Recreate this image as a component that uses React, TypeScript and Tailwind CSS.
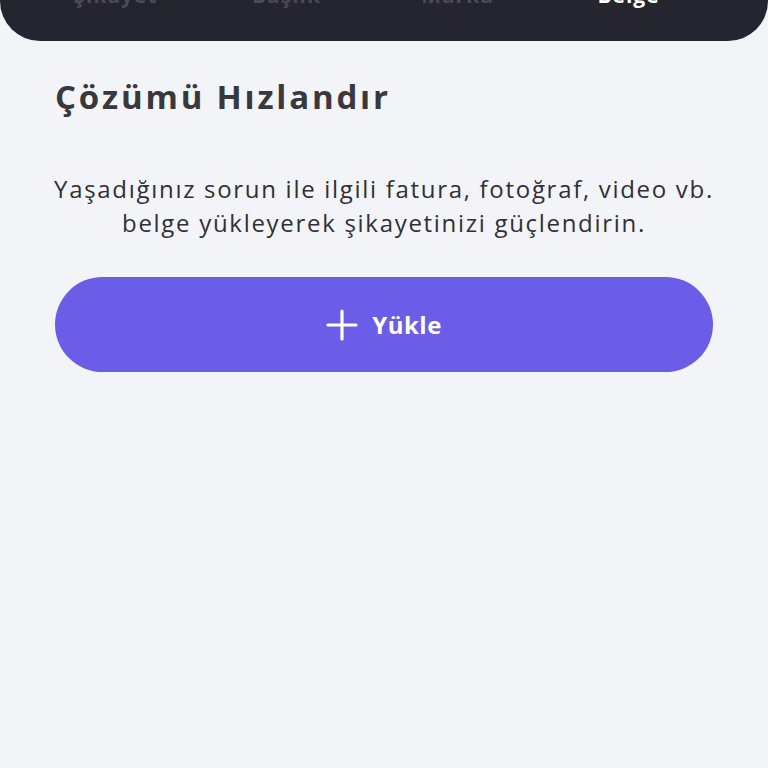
import React from "react";

export default function App() {
  const tabs = [
    { label: "Şikayet", active: false },
    { label: "Başlık", active: false },
    { label: "Marka", active: false },
    { label: "Belge", active: true },
  ];
  return (
    <div
      className="w-[768px] h-[768px] bg-[#f3f4f8] overflow-hidden"
      style={{ fontFamily: "'Open Sans', sans-serif" }}
    >
      <div className="h-[41px] bg-[#25252f] rounded-b-[40px] overflow-hidden pl-[30px] pr-[54px]">
        <div className="grid grid-cols-4 -mt-[18px]">
          {tabs.map((t) => (
            <div
              key={t.label}
              className={
                "text-center text-[21px] leading-[26px] font-bold tracking-[1px] " +
                (t.active ? "text-white" : "text-[#4a4a58]")
              }
            >
              {t.label}
            </div>
          ))}
        </div>
      </div>
      <div className="px-[55px]">
        <h1 className="mt-[34px] text-[33px] leading-[44px] font-bold text-[#38383d] tracking-[2.8px]">
          Çözümü Hızlandır
        </h1>
        <p className="mt-[53px] -mx-[20px] whitespace-nowrap text-center text-[24px] leading-[34px] text-[#303036] tracking-[1.7px]">
          Yaşadığınız sorun ile ilgili fatura, fotoğraf, video vb.
          <br />
          belge yükleyerek şikayetinizi güçlendirin.
        </p>
        <button className="mt-[37px] w-full h-[95px] rounded-full bg-[#6b5de8] flex items-center justify-center gap-[14px] text-white">
          <svg width="32" height="32" viewBox="0 0 32 32" fill="none">
            <path d="M16 2v28M2 16h28" stroke="white" strokeWidth="3.2" strokeLinecap="round" />
          </svg>
          <span className="text-[24px] font-bold tracking-[0.5px]">Yükle</span>
        </button>
      </div>
    </div>
  );
}
